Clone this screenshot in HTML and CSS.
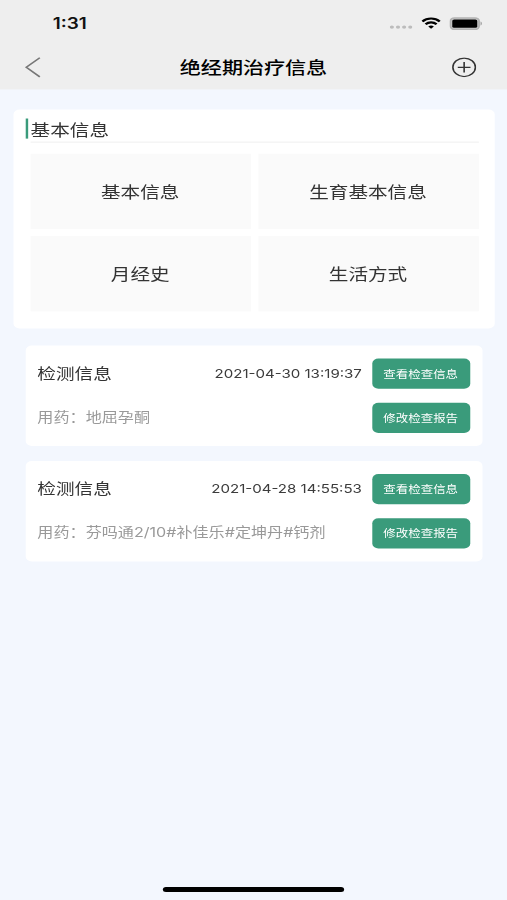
FILE: index.html
```html
<!DOCTYPE html>
<html lang="zh-CN">
<head>
<meta charset="utf-8">
<title>绝经期治疗信息</title>
<link rel="stylesheet" href="styles.css">
</head>
<body>
<div class="screen">
  <header class="header">
    <div class="status">
      <span class="time">1:31</span>
      <div class="status-icons">
        <svg class="dots" width="19" height="4" viewBox="0 0 19 4" fill="#bcbcbc"><circle cx="2" cy="2" r="1.7"/><circle cx="7" cy="2" r="1.7"/><circle cx="12" cy="2" r="1.7"/><circle cx="17" cy="2" r="1.7"/></svg>
        <svg class="wifi" width="16" height="12" viewBox="0 0 16 12" fill="none" stroke="#000" stroke-width="2.1"><path d="M.9 4.4C4.8.4 11.200.4 15.100 4.400"/><path d="M3.500 7.100C6 4.600 10 4.600 12.500 7.100"/><path d="M8 11.700L5.700 9.300C7 8 9 8 10.300 9.300Z" fill="#000" stroke="none"/></svg>
        <svg class="battery" width="27" height="13" viewBox="0 0 27 13"><rect x=".8" y=".8" width="23.400" height="11.400" rx="3.300" fill="#ccc" stroke="#b3b3b3" stroke-width="1.500"/><rect x="2.300" y="2.300" width="20.400" height="8.400" rx="1.500"/><path d="M25.300 4.500C27 5 27 8 25.300 8.500Z" fill="#aaa"/></svg>
      </div>
    </div>
    <nav class="nav">
      <svg class="back" width="14" height="22" viewBox="0 0 14 22" fill="none" stroke="#777" stroke-width="1.500"><path d="M12.500 1.500L1.500 11L12.500 20.500"/></svg>
      <h1 class="title">绝经期治疗信息</h1>
      <svg class="add" width="20" height="20" viewBox="0 0 20 20" fill="none" stroke="#333" stroke-width="1.300"><circle cx="10" cy="10" r="9.200"/><path d="M4.800 10H15.200M10 4.800V15.200"/></svg>
    </nav>
  </header>
  <main class="content">
    <section class="panel">
      <h2 class="panel-title"><span>基本信息</span></h2>
      <div class="tiles">
        <div class="tile">基本信息</div>
        <div class="tile">生育基本信息</div>
        <div class="tile">月经史</div>
        <div class="tile">生活方式</div>
      </div>
    </section>
    <article class="record">
      <div class="row"><h3>检测信息</h3><time>2021-04-30 13:19:37</time><button>查看检查信息</button></div>
      <div class="row"><p>用药：<span>地屈孕酮</span></p><button>修改检查报告</button></div>
    </article>
    <article class="record">
      <div class="row"><h3>检测信息</h3><time>2021-04-28 14:55:53</time><button>查看检查信息</button></div>
      <div class="row"><p>用药：<span>芬吗通2/10#补佳乐#定坤丹#钙剂</span></p><button>修改检查报告</button></div>
    </article>
  </main>
  <div class="home-bar"></div>
</div>
</body>
</html>
```
FILE: styles.css
```css
* { box-sizing: border-box; }
html { overflow: hidden; height: 900px; }
body { margin: 0; height: 900px; overflow: hidden; background: #f3f7fe; }
h1, h2, h3, p { margin: 0; font-weight: 400; }
svg { display: block; }

.screen {
  width: 414px;
  height: 896px;
  display: flex;
  flex-direction: column;
  transform: scale(1.22464, 1.00446);
  transform-origin: 0 0;
  font-family: Inter, "Noto Sans CJK SC", sans-serif;
  color: #333;
}
.header { height: 89px; background: #eee; flex: none; }
.status {
  height: 44px;
  padding: 2px 20.500px 0 43px;
  display: flex;
  justify-content: space-between;
  align-items: center;
}
.time { font-size: 15.5px; font-weight: 600; color: #111; padding-top: 1px; }
.status-icons { display: flex; align-items: center; }
.dots { margin: 8px 7px 0 0; }
.wifi { margin-right: 7px; }
.nav {
  height: 45px;
  padding: 0 25px 0 20px;
  display: flex;
  justify-content: space-between;
  align-items: center;
}
.title { font-size: 17.200px; line-height: 24px; font-weight: 500; color: #000; padding: 2px 0 0 11px; }
.content { flex: 1; padding: 19.500px 10px 0 10.500px; }
.panel {
  height: 218px;
  padding: 9.500px 13px 0 10px;
  margin-bottom: 17px;
  background: #fff;
  border-radius: 5px;
}
.panel-title {
  height: 24px;
  margin-left: 4px;
  border-bottom: 1.500px solid #efefef;
  font-size: 16px;
  line-height: 22px;
}
.panel-title span { display: block; width: 80px; height: 20px; margin-left: -4px; padding-left: 2.500px; border-left: 2px solid #3a9b7b; }
.tiles {
  display: grid;
  grid-template-columns: 180px 180px;
  grid-template-rows: 75px 75px;
  gap: 7px 6px;
  margin: 11px 0 0 4px;
}
.tile {
  display: flex;
  align-items: center;
  justify-content: center;
  padding-bottom: 2px;
  background: #fafafa;
  font-size: 16px;
}
.record {
  height: 100px;
  margin: 0 10px 15px 10.500px;
  padding: 13px 10.500px 0 9.500px;
  background: #fff;
  border-radius: 5px;
}
.row { display: flex; align-items: center; height: 30px; margin-bottom: 14px; }
.row h3 { font-size: 15.200px; padding-bottom: 3px; }
.row time { margin-left: auto; margin-right: 8px; padding-bottom: 1px; font-size: 12.300px; color: #3c3c3c; }
.row p { flex: 1; padding-bottom: 3px; font-size: 13.150px; color: #999; white-space: nowrap; }
.row button {
  width: 80px;
  height: 30px;
  padding: 0 0 1px;
  border: 0;
  border-radius: 5px;
  background: #3a9b7b;
  color: #fff;
  font: 10.200px Inter, "Noto Sans CJK SC", sans-serif;
}
.home-bar { width: 148px; height: 5px; margin: 0 0 8px 133px; border-radius: 3px; background: #000; flex: none; }
```
